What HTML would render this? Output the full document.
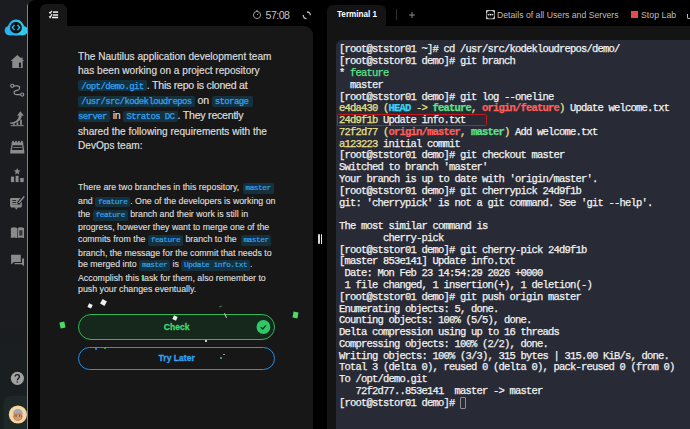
<!DOCTYPE html>
<html><head><meta charset="utf-8">
<style>
*{margin:0;padding:0;box-sizing:border-box}
html,body{width:690px;height:429px;overflow:hidden;background:#000;font-family:"Liberation Sans",sans-serif;position:relative}
.a{position:absolute}
#sidebar{left:0;top:0;width:40px;height:429px;background:linear-gradient(180deg,#1b1c20 0%,#1b1c20 72%,#17201f 100%)}
#blackcorner{left:27.6px;top:0;width:20px;height:429px;background:#000;border-radius:7px 0 0 0}
#blueline{display:none}
#tab1{left:40px;top:4px;width:27px;height:23px;background:#171717;border-radius:6px 6px 0 0}
#panel{left:40px;top:25.5px;width:273px;height:404px;background:#171717;border-radius:0 9px 0 0}
.ln{position:absolute;left:78px;white-space:pre;color:#dcdcdc}
.p1{font-size:10.6px;letter-spacing:-0.24px;line-height:14px;-webkit-text-stroke:0.2px #dcdcdc}
.p2{font-size:8.8px;line-height:12px;-webkit-text-stroke:0.15px #dcdcdc}
.ch{display:inline-block;position:relative;-webkit-text-stroke:0;font-family:"Liberation Mono",monospace;color:#36a2ef;background:#14313f;border-radius:2px;letter-spacing:0}
.c1{top:0;font-size:9px;line-height:8.7px;padding:2.6px 3.2px 0;letter-spacing:-0.6px;font-weight:normal;-webkit-text-stroke:0.25px #36a2ef}
.c2{font-size:7.8px;line-height:10.5px;padding:0 2.8px;letter-spacing:-0.47px;font-weight:normal;-webkit-text-stroke:0.2px #36a2ef}
#term-tab{left:327px;top:4.5px;width:58.5px;height:23px;background:#141414;border-radius:6px 6px 0 0}
#term-cont{left:327px;top:25.5px;width:363px;height:404px;background:#141414}
#term{left:336.3px;top:39.7px;width:354px;height:390px;background:#282b36;border-radius:6px 0 0 0}
.tl{font-family:"Liberation Mono",monospace;font-size:10.5px;letter-spacing:-0.8px;-webkit-text-stroke:0.25px currentColor;line-height:11.78px;color:#f2f2f2;white-space:pre;left:339px;top:44.4px}
.y{color:#ebe38c}.c{color:#38d5f5;font-weight:bold}.g{color:#5ce38a}.gb{color:#5ce38a;font-weight:bold}.r{color:#ff5f5a;font-weight:bold}
.topt{color:#bdbdbd;white-space:pre}
.btn{left:78px;width:197px;border-radius:14px;text-align:center;font-weight:bold;font-size:9.8px;letter-spacing:0}
.btn span{display:inline-block;transform:scaleX(0.875)}
#check{top:314px;height:25.5px;border:1.5px solid #2fb857;background:#16271b;color:#40d873;line-height:24.5px;-webkit-text-stroke:0.3px #40d873}
#later{top:347px;height:23px;border:1.5px solid #2b8fe0;background:#171717;color:#34a2f5;line-height:20px;-webkit-text-stroke:0.3px #34a2f5}
.conf{position:absolute}
</style></head>
<body>
<div class="a" id="sidebar"></div>
<div class="a" id="blackcorner"></div>
<div class="a" id="blueline"></div>
<!-- logo -->
<svg class="a" style="left:0;top:0" width="28" height="429" viewBox="0 0 28 429">
  <defs><linearGradient id="cg" x1="0" y1="0" x2="1" y2="0"><stop offset="0" stop-color="#2aa6f2"/><stop offset="1" stop-color="#33d4ea"/></linearGradient></defs>
  <g fill="url(#cg)">
    <circle cx="16" cy="27.6" r="8"/>
    <circle cx="9.3" cy="30.6" r="4.7"/>
    <circle cx="23" cy="30.6" r="4.7"/>
    <rect x="9.3" y="27" width="14" height="8.3"/>
  </g>
  <circle cx="16" cy="27.7" r="5.9" fill="#121418"/>
  <path d="M14.5 25 L12.3 27.6 L14.5 30.2 M17.5 25 L19.7 27.6 L17.5 30.2" stroke="#2cc2f0" stroke-width="1.3" fill="none"/>
  <!-- icons -->
  <g fill="#8b8b8b">
    <!-- home -->
    <path d="M17.3 54.9 L10.6 60.9 L12.3 60.9 L12.3 67.9 L22.7 67.9 L22.7 60.9 L24.1 60.9 L22.6 59.5 L22.6 57.6 L21.2 57.6 L21.2 58.3 Z"/>
    <rect x="19" y="62.6" width="1.9" height="5" rx="0.5" fill="#121316"/>
    <!-- route -->
    <circle cx="12.2" cy="85.8" r="1.55" fill="none" stroke="#959595" stroke-width="1.15"/>
    <circle cx="22.2" cy="94.6" r="1.55" fill="none" stroke="#959595" stroke-width="1.15"/>
    <path d="M13.8 85.9 H17.4 C20.3 85.9 20.4 89.7 17.4 90.3 L15.8 90.6 C13.2 91.1 13.6 94.6 16.2 94.6 H20.6" fill="none" stroke="#959595" stroke-width="1.2"/>
    <!-- chart -->
    <path d="M10.2 122.6 C15.5 122.4 18.6 119.5 19 115.3 L21.9 115.3 C21.6 120.6 16.5 123.8 10.2 123.9 Z"/>
    <path d="M20.4 111.3 L23.9 115.7 L17 115.7 Z"/>
    <rect x="13.1" y="123.4" width="1.7" height="1.8"/>
    <rect x="16.6" y="122.4" width="1.8" height="2.8"/>
    <rect x="20.1" y="119.6" width="1.8" height="5.6"/>
    <rect x="10.8" y="125.2" width="13" height="1"/>
    <!-- calendar -->
    <path d="M11.6 142.3 L23.3 142.3 L23.3 144.4 L24.3 151.6 L24.3 153.5 L10.2 153.5 L10.2 151.6 L11.6 144.4 Z M12.7 145.2 L11.9 150 L22.7 150 L22 145.2 Z" fill-rule="evenodd"/>
    <rect x="13.2" y="147.1" width="8.4" height="0.8"/>
    <rect x="12.2" y="140.7" width="1.6" height="2.4" rx="0.5"/><rect x="15.2" y="140.7" width="1.6" height="2.4" rx="0.5"/><rect x="18.1" y="140.7" width="1.6" height="2.4" rx="0.5"/><rect x="21" y="140.7" width="1.6" height="2.4" rx="0.5"/>
    <!-- podium -->
    <path d="M17.20 168.00 L18.14 170.31 L20.62 170.49 L18.72 172.09 L19.32 174.51 L17.20 173.20 L15.08 174.51 L15.68 172.09 L13.78 170.49 L16.26 170.31 Z"/>
    <rect x="10.9" y="176.6" width="3.2" height="5.5"/>
    <rect x="15.6" y="175.8" width="3" height="6.3"/>
    <rect x="20.2" y="178" width="3.5" height="4.1"/>
    <!-- note -->
    <rect x="10.1" y="198" width="11.8" height="9.4" rx="1.3"/>
    <path d="M14.8 207.2 L18.3 207.2 L16.2 209.7 Z"/>
    <rect x="12.4" y="200" width="3.7" height="0.9" fill="#1a1b1f"/>
    <rect x="12.4" y="202" width="3.7" height="0.9" fill="#1a1b1f"/>
    <rect x="12.4" y="204.2" width="8.3" height="0.8" fill="#5a5a5a"/>
    <path d="M18.9 202.6 L23.8 196.9" stroke="#1a1b1f" stroke-width="3.4" stroke-linecap="round"/>
    <path d="M19.1 202.4 L23.8 196.9" stroke="#8b8b8b" stroke-width="1.5" stroke-linecap="round"/>
    <!-- book -->
    <path d="M10.9 228 C12.8 227 15 227.1 17 228 L17 238 C15 237.2 12.8 237.2 10.9 238 Z"/>
    <path d="M17.6 228 C19.6 227 21.9 227.1 24 228 L24 238 C21.9 237.2 19.6 237.2 17.6 238 Z"/>
    <rect x="19.2" y="230.2" width="3.3" height="5.4" fill="#3a3a3a"/>
    <!-- chat -->
    <path d="M11.1 254.7 L20.8 254.7 L20.8 262 L14 262 L11.1 264.5 Z"/>
    <path d="M22 258.5 L24 258.5 L24 266.3 L21.6 264.3 L14.5 264.3 L14.5 263 L22 263 Z"/>
    <!-- help -->
    <circle cx="17.4" cy="378.3" r="6.6" fill="#a2a2a2"/>
  </g>
  <path d="M15.2 376.6 C15.2 373.9 19.4 373.9 19.4 376.6 C19.4 378.4 17.3 378.4 17.3 380.3" stroke="#15181b" stroke-width="1.3" fill="none"/>
  <circle cx="17.3" cy="382" r="0.75" fill="#15181b"/>
  <rect x="3.5" y="395.8" width="30" height="40" rx="8" fill="#1e2828"/>
  <circle cx="17.9" cy="414.5" r="9.1" fill="#f6d6a2"/>
  <ellipse cx="17.9" cy="416.6" rx="4.7" ry="4.2" fill="#b87a56"/>
  <ellipse cx="17.9" cy="417.4" rx="3.3" ry="2.8" fill="#d29b72"/>
  <path d="M12.9 414.6 C12.6 407 23.2 407 22.9 414.6 C20 413.2 15.8 413.2 12.9 414.6 Z" fill="#a2a8ad"/>
  <circle cx="16.1" cy="415.9" r="0.6" fill="#3a2a20"/>
  <circle cx="19.7" cy="415.9" r="0.6" fill="#3a2a20"/>
</svg>
<!-- redraw blue line on top of logo -->
<div class="a" style="left:26.9px;top:3px;width:1.4px;height:426px;background:linear-gradient(rgba(30,160,245,0) 0,#1ea0f5 3px,#1ea0f5 100%)"></div>

<div class="a" id="tab1"></div>
<svg class="a" style="left:48px;top:10px" width="12" height="10" viewBox="0 0 12 10">
  <path d="M1.2 2.3 L2.2 3.1 L3.9 0.9" stroke="#f4f4f4" stroke-width="1.2" fill="none"/>
  <path d="M1.3 6.2 L2.1 7.6 L4 4.1" stroke="#f4f4f4" stroke-width="1.2" fill="none"/>
  <rect x="5" y="1.35" width="5.1" height="1.5" fill="#eee"/>
  <rect x="5" y="4.25" width="5.1" height="1.5" fill="#eee"/>
  <rect x="4" y="6.75" width="6.1" height="1.5" fill="#f4f4f4"/>
</svg>
<div class="a" id="panel"></div>

<!-- timer -->
<svg class="a" style="left:252px;top:9px" width="11" height="11" viewBox="0 0 11 11">
  <circle cx="5" cy="6" r="3.6" stroke="#aaa" stroke-width="0.9" fill="none"/>
  <rect x="4.4" y="1" width="1.2" height="1.4" fill="#aaa"/>
  <path d="M5 6 L6.3 4.6" stroke="#aaa" stroke-width="0.8"/>
</svg>
<div class="a topt" style="left:265.5px;top:9px;font-size:10.6px;letter-spacing:-0.5px;color:#c2c2c2">57:08</div>
<svg class="a" style="left:302px;top:10px" width="10" height="10" viewBox="0 0 10 10">
  <path d="M4.9 2 Q8.3 2 8.3 5.2 M1.3 5 Q1.3 8.7 4.6 8.7" stroke="#b8b8b8" stroke-width="1.3" fill="none"/>
</svg>

<!-- paragraph 1 -->
<div class="ln p1" style="top:48.75px;letter-spacing:0;transform:scaleX(0.952);transform-origin:0 0">The Nautilus application development team</div>
<div class="ln p1" style="top:62.75px;letter-spacing:0;transform:scaleX(0.952);transform-origin:0 0">has been working on a project repository</div>
<div class="ln p1" style="top:77.65px"><span class="ch c1">/opt/demo.git</span>. This repo is cloned at</div>
<div class="ln p1" style="top:93.25px"><span class="ch c1">/usr/src/kodekloudrepos</span> on <span class="ch c1" style="padding-right:0">storage </span></div>
<div class="ln p1" style="top:108.15px"><span class="ch c1" style="padding-left:0">server</span> in <span class="ch c1">Stratos DC</span>. They recently</div>
<div class="ln p1" style="top:124.05px;letter-spacing:0;transform:scaleX(0.952);transform-origin:0 0">shared the following requirements with the</div>
<div class="ln p1" style="top:138.15px;letter-spacing:0;transform:scaleX(0.952);transform-origin:0 0">DevOps team:</div>

<!-- paragraph 2 -->
<div class="ln p2" style="top:181.00px">There are two branches in this repository, <span class="ch c2" style="margin-left:1px">master</span></div>
<div class="ln p2" style="top:194.90px">and <span class="ch c2">feature</span>. One of the developers is working on</div>
<div class="ln p2" style="top:208.10px">the <span class="ch c2">feature</span> branch and their work is still in</div>
<div class="ln p2" style="top:220.80px">progress, however they want to merge one of the</div>
<div class="ln p2" style="top:233.00px">commits from the <span class="ch c2">feature</span> branch to the <span class="ch c2" style="margin-left:1.4px">master</span></div>
<div class="ln p2" style="top:246.60px">branch, the message for the commit that needs to</div>
<div class="ln p2" style="top:258.40px">be merged into <span class="ch c2">master</span> is <span class="ch c2">Update info.txt</span>.</div>
<div class="ln p2" style="top:271.80px">Accomplish this task for them, also remember to</div>
<div class="ln p2" style="top:283.40px">push your changes eventually.</div>

<!-- buttons -->
<div class="a btn" id="check"><span>Check</span></div>
<svg class="a" style="left:256px;top:320px" width="15" height="15" viewBox="0 0 15 15">
  <circle cx="7.4" cy="7" r="6.9" fill="#2ec866"/>
  <path d="M4.8 7.1 L6.7 9 L10 5.4" stroke="#10361d" stroke-width="1.3" fill="none"/>
</svg>
<div class="a btn" id="later"><span>Try Later</span></div>

<!-- confetti -->
<div class="conf" style="left:87.8px;top:304px;width:4.4px;height:4.4px;background:#eee;transform:rotate(25deg)"></div>
<div class="conf" style="left:101.2px;top:300.2px;width:5px;height:5px;background:#eee;transform:rotate(30deg)"></div>
<div class="conf" style="left:59.6px;top:321.8px;width:4.6px;height:6.4px;background:#4cd964;transform:rotate(-12deg)"></div>
<div class="conf" style="left:173px;top:316px;width:4px;height:4px;background:#eee;transform:rotate(25deg)"></div>
<div class="conf" style="left:293px;top:312px;width:5px;height:6px;background:#4cd964;transform:rotate(10deg)"></div>
<div class="conf" style="left:142px;top:275px;width:2px;height:5px;background:#4cd964"></div>
<div class="conf" style="left:224.5px;top:312.5px;width:1px;height:5px;background:#ccc;transform:rotate(-25deg)"></div>
<div class="conf" style="left:204.5px;top:339.5px;width:2px;height:2px;background:#ccc"></div>
<div class="conf" style="left:219px;top:306px;width:3px;height:1px;background:#3a7a4a;transform:rotate(-20deg)"></div>
<div class="conf" style="left:220px;top:357px;width:1.5px;height:1.5px;background:#3d9a55"></div>
<div class="conf" style="left:223px;top:353.5px;width:1.5px;height:1.5px;background:#999"></div>
<div class="conf" style="left:94.5px;top:347.5px;width:2px;height:2px;background:#2d6fd0"></div>
<div class="conf" style="left:104px;top:347.8px;width:1.5px;height:1.5px;background:#3d9a55"></div>

<!-- handle -->
<div class="a" style="left:317.9px;top:234px;width:2.2px;height:9.6px;background:#d8d8d8;border-radius:1px"></div>
<div class="a" style="left:320.6px;top:234px;width:1.7px;height:9.6px;background:#e8e8e8;border-radius:1px"></div>

<!-- right top bar -->
<div class="a" id="term-tab"></div>
<div class="a" id="term-cont"></div>
<div class="a" style="left:337px;top:9.3px;font-size:9.2px;font-weight:bold;color:#fff;white-space:pre;transform:scaleX(0.885);transform-origin:0 0">Terminal 1</div>
<div class="a" style="left:395.6px;top:9.3px;width:1px;height:11px;background:#2e2e2e"></div>
<svg class="a" style="left:408px;top:11px" width="9" height="9" viewBox="0 0 9 9"><path d="M4 1 V7 M1 4 H7" stroke="#999" stroke-width="0.9"/></svg>
<svg class="a" style="left:486px;top:9.8px" width="10" height="10" viewBox="0 0 10 10">
  <rect x="0" y="0" width="9" height="9.3" rx="0.8" fill="#c4c4c4"/>
  <circle cx="4.5" cy="4.65" r="3.9" fill="#0c0c0c"/>
  <rect x="0.8" y="4.4" width="7.4" height="0.5" fill="#777"/>
  <circle cx="2.6" cy="4.65" r="0.75" fill="#ddd"/>
  <circle cx="4.5" cy="4.65" r="0.8" fill="#eee"/>
  <circle cx="6.4" cy="4.65" r="0.75" fill="#ddd"/>
</svg>
<div class="a topt" style="left:497.4px;top:9px;font-size:9.6px;transform:scaleX(0.905);transform-origin:0 0">Details of all Users and Servers</div>
<div class="a" style="left:631px;top:11.4px;width:6.6px;height:6.6px;background:#e8494b"></div>
<div class="a topt" style="left:640.5px;top:9px;font-size:9.6px;transform:scaleX(0.915);transform-origin:0 0">Stop Lab</div>
<div class="a" style="left:687.4px;top:14px;width:4px;height:5px;border-left:1.2px solid #bbb;border-bottom:1.2px solid #bbb;border-radius:0 0 0 2px"></div>

<div class="a" id="term"></div>
<div class="a" style="left:336.7px;top:113.5px;width:150.5px;height:12px;border:1.6px solid #c21a1d;border-radius:1.5px"></div>
<div class="a tl">[root@ststor01 ~]# cd /usr/src/kodekloudrepos/demo/
[root@ststor01 demo]# git branch
* <span class="g">feature</span>
  master
[root@ststor01 demo]# git log --oneline
<span class="y">e4da430 (</span><span class="c">HEAD</span><span class="y"> -&gt; </span><span class="gb">feature</span><span class="y">, </span><span class="r">origin/feature</span><span class="y">)</span> Update welcome.txt
<span class="y">24d9f1b</span> Update info.txt
<span class="y">72f2d77 (</span><span class="r">origin/master</span><span class="y">, </span><span class="gb">master</span><span class="y">)</span> Add welcome.txt
<span class="y">a123223</span> initial commit
[root@ststor01 demo]# git checkout master
Switched to branch 'master'
Your branch is up to date with 'origin/master'.
[root@ststor01 demo]# git cherrypick 24d9f1b
git: 'cherrypick' is not a git command. See 'git --help'.

The most similar command is
        cherry-pick
[root@ststor01 demo]# git cherry-pick 24d9f1b
[master 853e141] Update info.txt
 Date: Mon Feb 23 14:54:29 2026 +0000
 1 file changed, 1 insertion(+), 1 deletion(-)
[root@ststor01 demo]# git push origin master
Enumerating objects: 5, done.
Counting objects: 100% (5/5), done.
Delta compression using up to 16 threads
Compressing objects: 100% (2/2), done.
Writing objects: 100% (3/3), 315 bytes | 315.00 KiB/s, done.
Total 3 (delta 0), reused 0 (delta 0), pack-reused 0 (from 0)
To /opt/demo.git
   72f2d77..853e141  master -&gt; master
[root@ststor01 demo]# </div>
<div class="a" style="left:460px;top:396.7px;width:6.2px;height:12.5px;border:1px solid #8d8d8d;border-radius:1px"></div>
</body></html>
